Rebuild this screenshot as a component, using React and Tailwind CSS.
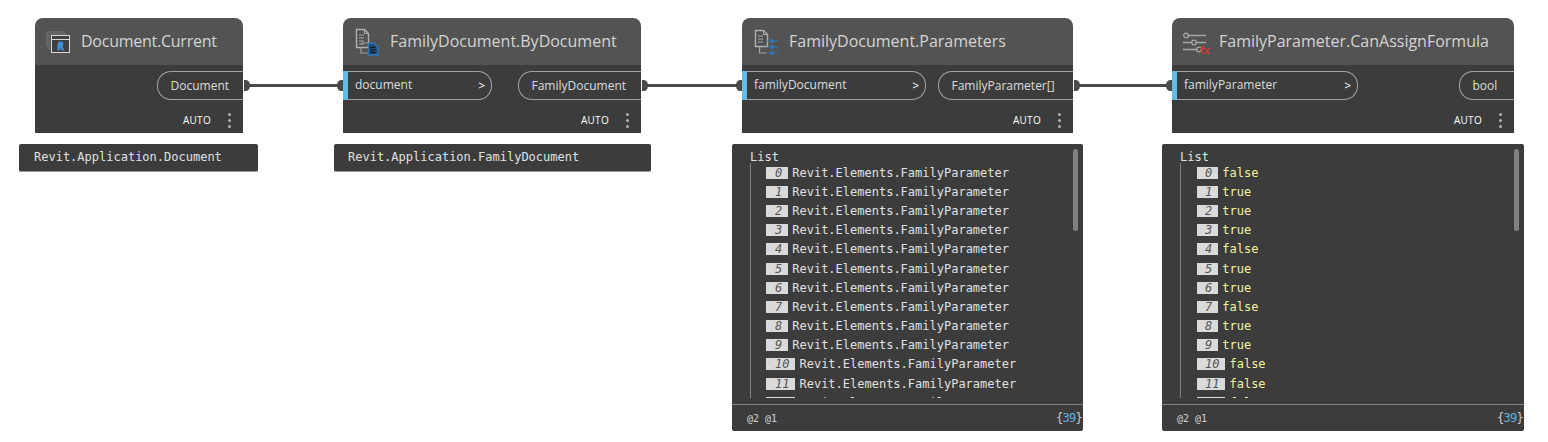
const sans = "font-['Open_Sans',sans-serif]"
const mono = "font-['DejaVu_Sans_Mono',monospace]"

const IconDocument = () => (
  <svg width="26" height="24" viewBox="0 0 26 24" fill="none">
    <path d="M1 17V2h17M3 19V4h17" stroke="#777" strokeWidth="1" />
    <rect x="5.500" y="5.500" width="18" height="17" fill="#3f3f3f" stroke="#d8d8d8" strokeWidth="1" />
    <path d="M5 9.500h19" stroke="#d8d8d8" strokeWidth="1" />
    <path d="M11.500 20.500v-6a3 3 0 0 1 6 0l-1 2 2 4h-2.500l-1.500-2-1 2z" fill="#3c8fd6" />
  </svg>
)

const IconFamilyDoc = () => (
  <svg width="26" height="28" viewBox="0 0 26 28" fill="none">
    <path d="M1.500 1.500h8l4 4v14h-12z" stroke="#b0b0b0" strokeWidth="1.400" fill="#505050" />
    <path d="M9.500 1.500v4h4" stroke="#b0b0b0" strokeWidth="1" />
    <path d="M4 7h5M4 10h5M4 13h5M4 16h5" stroke="#8c8c8c" strokeWidth="1.600" />
    <path d="M6 19.500v5.500h7M6 15h7" stroke="#a0a0a0" strokeWidth="1.200" />
    <path d="M13.500 15.500h6l3.500 3.500v8h-9.500z" fill="#1f4a6e" stroke="#2b78b8" strokeWidth="1.300" />
    <path d="M15.500 19.500h5M15.500 22h5M15.500 24.500h5" stroke="#151515" strokeWidth="1" />
  </svg>
)

const IconParams = () => (
  <svg width="28" height="28" viewBox="0 0 28 28" fill="none">
    <path d="M1.500 2.500h8l4 4v12h-12z" stroke="#b0b0b0" strokeWidth="1.400" fill="#505050" />
    <path d="M9.500 2.500v4h4" stroke="#b0b0b0" strokeWidth="1" />
    <path d="M4 8h5M4 11h5M4 14h5" stroke="#8c8c8c" strokeWidth="1.600" />
    <path d="M5.500 18.500v6.500h7" stroke="#a0a0a0" strokeWidth="1.200" />
    <path d="M13 13h11M13 19h11M13 25h11" stroke="#2f78b5" strokeWidth="1.200" />
    <circle cx="18" cy="13" r="2" fill="#2f78b5" />
    <circle cx="18" cy="19" r="2" fill="#2f78b5" />
    <circle cx="18" cy="25" r="2" fill="#2f78b5" />
  </svg>
)

const IconFormula = () => (
  <svg width="27" height="26" viewBox="0 0 27 26" fill="none">
    <path d="M6 6.500h17M0 13.500h9M14 13.500h9M0 20.500h14" stroke="#a8a8a8" strokeWidth="1.400" />
    <circle cx="3" cy="6.500" r="2.300" stroke="#a8a8a8" strokeWidth="1.300" />
    <circle cx="11" cy="13.500" r="2.300" stroke="#a8a8a8" strokeWidth="1.300" />
    <circle cx="16" cy="20.500" r="2.300" stroke="#a8a8a8" strokeWidth="1.300" />
    <text x="17" y="24.500" fill="#c8383c" fontSize="10" fontWeight="700" fontFamily="Open Sans">fx</text>
  </svg>
)

const InPort = ({ name, w }) => (
  <div className={`${w} h-[29px] flex items-center justify-between border-y border-r border-[#a3a3a3] rounded-r-[14px] bg-[#3c3c3c]`}>
    <div className="flex items-center h-[29px] -my-px border-l-[5px] border-[#62bce8] pl-[7px] pb-[2px] text-[12px] text-[#dcdcdc]">{name}</div>
    <span className="pr-[6px] text-[12px] font-semibold text-[#dcdcdc]">&gt;</span>
  </div>
)

const OutPort = ({ name, w }) => (
  <div className={`${w} h-[29px] flex items-center border-y border-l border-[#a3a3a3] rounded-l-[14px] pl-[12.500px] text-[12px] text-[#dcdcdc]`}>
    {name}
  </div>
)

const Node = ({ title, titleCls, icon, input, inW, output, outW, iconPad, iconW = "w-[35px]" }) => (
  <div className={`flex flex-col ${sans}`}>
    <div className={`h-[47px] flex items-center rounded-t-[8px] bg-[#535353] ${iconPad}`}>
      <div className={`${iconW} shrink-0`}>{icon}</div>
      <div className={`text-[16px] text-[#d4d4d4] whitespace-nowrap pb-[1px] ${titleCls}`}>{title}</div>
    </div>
    <div className="h-[68px] flex flex-col bg-[#3c3c3c]">
      <div className="mt-[6px] flex justify-between">
        {input ? <InPort name={input} w={inW} /> : <div />}
        <OutPort name={output} w={outW} />
      </div>
      <div className="mt-[8px] h-[25px] flex items-center justify-end pr-[12px] gap-[17px]">
        <span className="pb-[1px] text-[10px] tracking-[0.300px] text-white">AUTO</span>
        <div className="flex flex-col gap-[3px]">
          <i className="block w-[3px] h-[3px] rounded-full bg-[#b0b0b0]" />
          <i className="block w-[3px] h-[3px] rounded-full bg-[#b0b0b0]" />
          <i className="block w-[3px] h-[3px] rounded-full bg-[#b0b0b0]" />
        </div>
      </div>
    </div>
  </div>
)

const Tooltip = ({ text, pad }) => (
  <div className={`mt-[11px] h-[28px] flex items-center ${pad} pb-[1px] rounded-[2px] bg-[#3c3c3c] border-b border-[#9a9a9a] text-[12px] text-[#e0e0e0] whitespace-nowrap ${mono}`}>
    {text}
  </div>
)

const ListPanel = ({ rows, valueCls, rowPad, boxPad }) => (
  <div className={`relative mt-[11px] h-[287px] flex flex-col rounded-[2px] bg-[#3c3c3c] text-[12px] ${mono}`}>
    <div className="absolute top-[5px] right-[5px] w-[5px] h-[82px] rounded-full bg-[#808080]" />
    <div className="h-[254px] overflow-hidden pl-[18px] pt-[7px]">
      <div className="leading-[12px] text-[#e0e0e0]">List</div>
      <div className={`h-[236px] border-l border-[#808080] ${rowPad}`}>
        {rows.map((r, i) => (
          <div key={i} className="h-[19.200px] flex items-center gap-[4px] whitespace-nowrap">
            <span className={`h-[12px] flex items-center ${boxPad} pr-[6px] bg-[#dadada] text-[#555] italic text-[12px]`}>{i}</span>
            <span className={valueCls}>{r}</span>
          </div>
        ))}
      </div>
    </div>
    <div className="h-[27px] mt-[6px] flex items-center justify-between border-t border-[#808080] pl-[15px] pr-[1px]">
      <span className="text-[10px] text-[#d0d0d0]">@2 @1</span>
      <span className="text-[12px] tracking-[-0.700px] text-[#c8c8c8]">{"{"}<span className="text-[#5cb4e4]">39</span>{"}"}</span>
    </div>
  </div>
)

const paramRows = Array.from({ length: 13 }, () => "Revit.Elements.FamilyParameter")
const boolRows = ["false", "true", "true", "true", "false", "true", "true", "false", "true", "true", "false", "false", "false"]

// wires between the ports, x is where the output dot starts and the input dot ends
const wires = [[244, 343], [642, 742], [1074, 1172]]

const Wires = () => (
  <svg className="absolute left-0 top-0" width="1548" height="442">
    {wires.map(([a, b]) => (
      <g key={a} fill="#4a4a4a">
        <rect x={a + 4} y="84" width={b - a - 8} height="3" />
        <path d={`M${a} 80h2a4 5.500 0 0 1 0 11h-2z`} />
        <path d={`M${b} 80h-2a4 5.500 0 0 0 0 11h2z`} />
      </g>
    ))}
  </svg>
)

export default function App() {
  return (
    <div className="relative w-[1548px] h-[442px] bg-white overflow-hidden">
      <Wires />

      <div className="absolute left-[19px] top-[18px] w-[239px]">
        <div className="ml-[16px] mr-[15px]">
          <Node title="Document.Current" titleCls="tracking-[-0.250px]" icon={<IconDocument />} iconPad="pl-[11px]" output="Document" outW="w-[86px]" />
        </div>
        <Tooltip text="Revit.Application.Document" pad="pl-[15px]" />
      </div>

      <div className="absolute left-[334px] top-[18px] w-[317px]">
        <div className="ml-[9px] mr-[10px]">
          <Node title="FamilyDocument.ByDocument" icon={<IconFamilyDoc />} iconPad="pl-[12px]" input="document" inW="w-[149px]" output="FamilyDocument" outW="w-[123px]" />
        </div>
        <Tooltip text="Revit.Application.FamilyDocument" pad="pl-[14px]" />
      </div>

      <div className="absolute left-[732px] top-[18px] w-[351px]">
        <div className="mx-[10px]">
          <Node title="FamilyDocument.Parameters" icon={<IconParams />} iconPad="pl-[12px]" input="familyDocument" inW="w-[184px]" output="FamilyParameter[]" outW="w-[135px]" />
        </div>
        <ListPanel rows={paramRows} valueCls="text-[#e0e0e0]" rowPad="pl-[15px]" boxPad="pl-[9px]" />
      </div>

      <div className="absolute left-[1162px] top-[18px] w-[362px]">
        <div className="mx-[10px]">
          <Node title="FamilyParameter.CanAssignFormula" icon={<IconFormula />} iconPad="pl-[11px]" iconW="w-[36px]" input="familyParameter" inW="w-[186px]" output="bool" outW="w-[55px]" />
        </div>
        <ListPanel rows={boolRows} valueCls="text-[#f2f2a0]" rowPad="pl-[16px]" boxPad="pl-[8px]" />
      </div>
    </div>
  )
}
